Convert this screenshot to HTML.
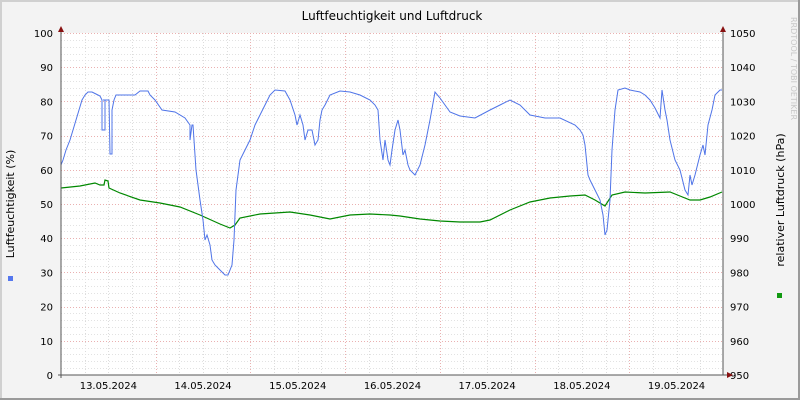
<!DOCTYPE html>
<html><head><meta charset="utf-8"><style>
html,body{margin:0;padding:0;background:#f3f3f3;}
svg{display:block;font-family:"DejaVu Sans","Liberation Sans",sans-serif;}
</style></head><body>
<svg id="s" width="800" height="400" xmlns="http://www.w3.org/2000/svg">
<rect x="0" y="0" width="800" height="400" fill="#f3f3f3"/>
<rect x="0" y="0" width="800" height="2" fill="#d0d0d0"/>
<rect x="0" y="0" width="2" height="400" fill="#d0d0d0"/>
<rect x="0" y="398" width="800" height="2" fill="#9a9a9a"/>
<rect x="798" y="0" width="2" height="400" fill="#9a9a9a"/>
<rect x="61" y="33" width="662" height="342" fill="#ffffff"/>
<g id="grid"></g>
<text x="392" y="20" font-size="12" text-anchor="middle" fill="#000">Luftfeuchtigkeit und Luftdruck</text>
<text transform="translate(14,204) rotate(-90)" font-size="11" text-anchor="middle" fill="#000">Luftfeuchtigkeit (%)</text>
<text transform="translate(784,200) rotate(-90)" font-size="11" text-anchor="middle" fill="#000">relativer Luftdruck (hPa)</text>
<text transform="translate(791,17) rotate(90)" font-size="8" fill="#c8c8c8">RRDTOOL / TOBI OETIKER</text>
<rect x="8" y="276" width="5" height="5" fill="#5577ee"/>
<rect x="777" y="293" width="5" height="5" fill="#119911"/>
<g id="labels" font-size="10" fill="#000"></g>
<polyline fill="none" stroke="#008800" stroke-width="1.2" points="61,188 80,186 95,183 100,185 104,185 105,180 108,181 109,188 120,193 140,200 160,203 180,207 200,215 220,224 230,228 235,225 240,218 260,214 290,212 310,215 330,219 350,215 370,214 390,215 400,216 420,219 440,221 460,222 480,222 490,220 510,210 530,202 550,198 570,196 585,195 595,200 605,206 612,195 625,192 645,193 670,192 680,196 690,200 700,200 710,197 722,192"/>
<polyline fill="none" stroke="#4f74e8" stroke-width="1" points="61,165 63,160 66,150 70,140 73,130 76,120 79,110 82,100 85,95 88,92 92,92 96,94 100,96 102,100 102,130 105,130 105,100 103,100 109,100 110,154 112,154 112,110 114,100 116,95 125,95 135,95 140,91 148,91 150,95 155,100 162,110 175,112 185,118 190,125 190,140 192,125 193,125 196,170 200,200 203,220 205,240 207,235 210,245 212,260 215,265 220,270 225,275 228,275 232,265 234,240 236,190 240,160 245,150 250,140 255,125 260,115 265,105 270,95 275,90 285,91 290,100 295,115 297,125 300,115 303,125 305,140 308,130 312,130 315,145 318,140 320,120 322,110 325,105 330,95 340,91 350,92 360,95 370,100 375,105 378,110 380,140 383,160 385,140 388,160 390,165 392,150 395,130 398,120 400,130 403,155 405,150 408,165 410,170 415,175 420,165 425,145 430,120 435,92 440,98 445,105 450,112 460,116 475,118 490,110 500,105 510,100 520,105 530,115 545,118 560,118 575,125 580,130 583,135 585,145 588,175 590,180 595,190 600,200 603,215 605,235 607,230 610,200 612,150 615,110 618,90 625,88 630,90 640,92 645,95 650,100 655,108 660,118 662,90 665,110 667,120 670,140 675,160 680,170 685,190 688,195 690,175 692,185 695,175 700,155 703,145 705,155 708,125 712,110 715,95 720,90 722,90"/>
<line x1="61" y1="30" x2="61" y2="378" stroke="#555" stroke-width="1"/>
<line x1="723" y1="30" x2="723" y2="375" stroke="#555" stroke-width="1"/>
<line x1="58" y1="375" x2="729" y2="375" stroke="#555" stroke-width="1"/>
<polygon points="58,32 64,32 61,26" fill="#881111"/>
<polygon points="720,32 726,32 723,26" fill="#881111"/>
<polygon points="727,372 727,378 733,375" fill="#881111"/>
</svg>
<script>
var ns="http://www.w3.org/2000/svg",g=document.getElementById('grid'),L=document.getElementById('labels');
function ln(x1,y1,x2,y2,c){var l=document.createElementNS(ns,'line');l.setAttribute('x1',x1);l.setAttribute('y1',y1);l.setAttribute('x2',x2);l.setAttribute('y2',y2);l.setAttribute('stroke',c);l.setAttribute('stroke-dasharray','1,2');l.setAttribute('stroke-width','1');g.appendChild(l);}
function tx(x,y,s,a){var t=document.createElementNS(ns,'text');t.setAttribute('x',x);t.setAttribute('y',y);t.setAttribute('text-anchor',a);t.textContent=s;L.appendChild(t);}
var day=94.7;
for(var i=1;i<28;i++){var x=Math.round(61+i*day/4)+0.5;if(x>722)break;ln(x,33,x,375,(i%4==0)?'#eab0b0':'#dcdcdc');}
for(var v=2;v<=100;v+=2){var y=Math.round(375-v*3.42)+0.5;ln(61,y,723,y,(v%10==0)?'#eab0b0':'#e2e2e2');}
for(var v=0;v<=100;v+=10){var y=375-v*3.42;tx(53,y+4,String(v),'end');tx(730,y+4,String(950+v),'start');}
var d=['13.05.2024','14.05.2024','15.05.2024','16.05.2024','17.05.2024','18.05.2024','19.05.2024'];
for(var i=0;i<7;i++)tx(61+day*(i+0.5),389,d[i],'middle');
</script>
</body></html>
